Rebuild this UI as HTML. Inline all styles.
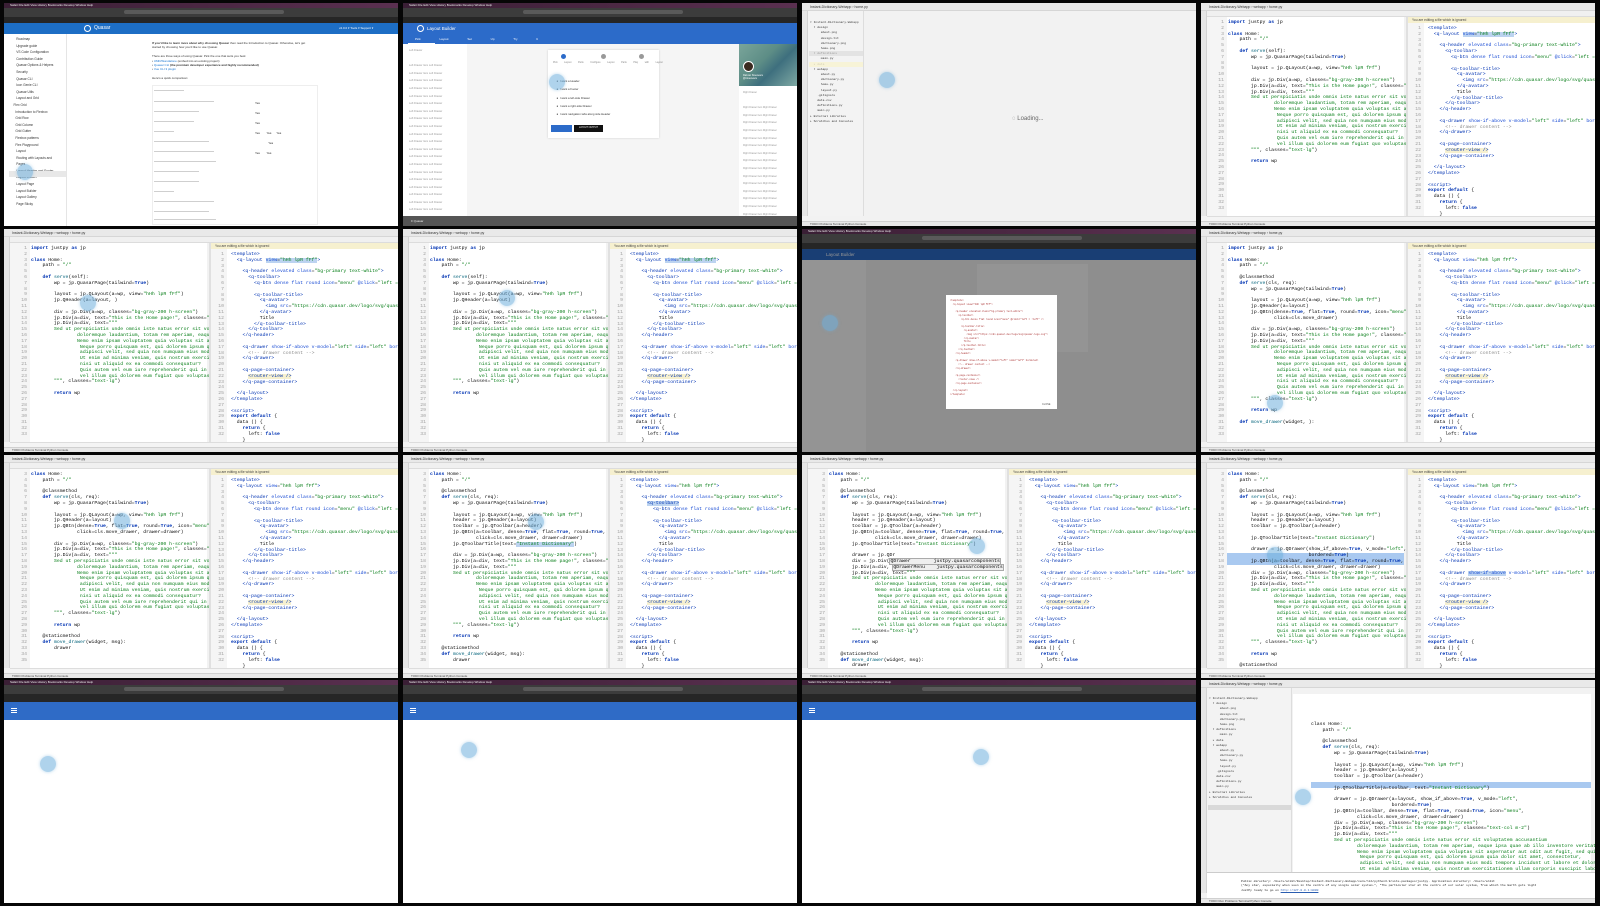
<!DOCTYPE html>
<html><head><meta charset="utf-8">
<style>
*{margin:0;padding:0;box-sizing:border-box}
body{width:1600px;height:906px;background:#060606;position:relative;overflow:hidden;font-family:"Liberation Sans",sans-serif}
.t{position:absolute;width:394px;height:223px;overflow:hidden;background:#f2f2f2}
.a{position:absolute}
pre{font-family:"Liberation Mono",monospace;font-size:4.8px;line-height:5.8px;white-space:pre;color:#080808}
.k{color:#0033b3;font-weight:bold}.s{color:#067d17}.d{color:#067d17}.f{color:#00627a}.tg{color:#0033b3}.at{color:#174ad4}.cm{color:#8c8c8c}
.ttl{left:0;top:0;width:394px;height:8px;background:#e9e9e9;border-bottom:1px solid #d6d6d6;font-size:3.5px;line-height:8px;padding-left:8px;color:#333}
.tabs{left:6px;top:8px;width:388px;height:6px;background:#f0f0f0;border-bottom:1px solid #dcdcdc}
.ls{left:0;top:8px;width:6px;height:205px;background:#e6e6e6;border-right:1px solid #d3d3d3}
.e1{left:6px;top:14px;width:197px;height:199px;background:#fff}
.e2{left:205px;top:14px;width:189px;height:199px;background:#fff;border-left:2px solid #e0e0e0}
.g{left:0;top:0;width:20px;height:199px;background:#f5f5f5;color:#a0a0a0;text-align:right;padding-right:3px;padding-top:3px}
.note{left:0;top:0;width:189px;height:6px;background:#f6f0cf;font-size:3.3px;line-height:6px;padding-left:4px;color:#444}
.bc{left:6px;top:213px;width:388px;height:5px;background:#f4f4f4;border-top:1px solid #ddd}
.sb{left:0;top:218px;width:394px;height:5px;background:#e8e8e8;font-size:3px;line-height:5px;padding-left:8px;color:#444;border-top:1px solid #d0d0d0}
.mb{left:0;top:0;width:394px;height:5px;background:linear-gradient(90deg,#3a1f35,#4a2742 50%,#5a3050);font-size:3px;line-height:5px;color:#eee;padding-left:6px}
.tb{left:0;top:5px;width:394px;height:9px;background:#3c3c3c}
.url{left:120px;top:7px;width:160px;height:4px;background:#5a5a5a;border-radius:2px}
.tab{left:0;top:14px;width:394px;height:6px;background:#262626}
.c{position:absolute;width:16px;height:16px;border-radius:50%;background:rgba(110,175,220,.55);box-shadow:0 0 3px rgba(110,175,220,.5)}
.ln{height:1.3px;background:#cfcfcf;position:absolute}
</style></head><body>

<!-- ROW 1 COL 1 : Quasar docs -->
<div class="t" style="left:4px;top:3px;background:#fff">
<div class="a mb">  Safari  File  Edit  View  History  Bookmarks  Develop  Window  Help</div>
<div class="a tb"></div><div class="a url"></div><div class="a tab"></div>
<div class="a" style="left:0;top:20px;width:394px;height:11px;background:#1d6ec5"></div>
<div class="a" style="left:80px;top:22px;width:7px;height:7px;border-radius:50%;border:1px solid #fff"></div>
<div class="a" style="left:90px;top:22px;font-size:5px;color:#fff">Quasar</div>
<div class="a" style="left:335px;top:23px;font-size:3px;color:#fff">v2.0.0 ▾    Tools ▾    Support ▾</div>
<div class="a" style="left:0;top:31px;width:63px;height:192px;background:#fff;border-right:1px solid #e5e5e5"></div>
<pre class="a" style="left:6px;top:33px;font-size:3.2px;line-height:6.6px;color:#333;font-family:'Liberation Sans',sans-serif">       Roadmap
       Upgrade guide
       VS Code Configuration
       Contribution Guide
       Quasar Options &amp; Helpers
       Security
       Quasar CLI
       Icon Genie CLI
       Quasar Utils
       Layout and Grid
    Flex Grid
      Introduction to Flexbox
      Grid Row
      Grid Column
      Grid Gutter
      Flexbox patterns
      Flex Playground
       Layout
       Routing with Layouts and
       Pages
       Layout Header and Footer
       Layout Drawer
       Layout Page
       Layout Builder
       Layout Gallery
       Page Sticky</pre>
<div class="a" style="left:5px;top:168px;width:57px;height:6px;background:#e8e8e8"></div>
<div class="a" style="left:148px;top:38px;width:160px;font-size:3px;line-height:4.4px;color:#333"><b>If you'd like to learn more about why choosing Quasar</b> then read the Introduction to Quasar. Otherwise, let's get started by choosing how you'd like to use Quasar.<br><br>There are three ways of using Quasar. Pick the one that suits you best:<br> • <span style="color:#1976d2">UMD/Standalone</span> (embed into an existing project)<br> • <span style="color:#1976d2">Quasar CLI</span> <b>(the premium developer experience and highly recommended)</b><br> • <span style="color:#1976d2">Vue CLI 3 plugin</span><br><br>Here's a quick comparison:</div>
<div class="a" style="left:148px;top:82px;width:166px;height:140px;border:1px solid #eee"></div>
<div class="ln" style="left:150px;top:87px;width:30px"></div>
<div class="ln" style="left:150px;top:98px;width:60px"></div><div class="ln" style="left:150px;top:108px;width:45px"></div><div class="ln" style="left:150px;top:118px;width:40px"></div><div class="ln" style="left:150px;top:128px;width:20px"></div><div class="ln" style="left:150px;top:138px;width:55px"></div><div class="ln" style="left:150px;top:148px;width:60px"></div><div class="ln" style="left:150px;top:158px;width:62px"></div><div class="ln" style="left:150px;top:168px;width:45px"></div><div class="ln" style="left:150px;top:178px;width:45px"></div><div class="ln" style="left:150px;top:188px;width:20px"></div><div class="ln" style="left:150px;top:198px;width:60px"></div><div class="ln" style="left:150px;top:208px;width:55px"></div><div class="ln" style="left:150px;top:216px;width:62px"></div>
<div class="a" style="left:251px;top:95px;width:60px;font-size:3px;line-height:10px;color:#222">Yes<br>Yes<br>Yes<br>Yes &nbsp;&nbsp;&nbsp;&nbsp;&nbsp;&nbsp; Yes &nbsp;&nbsp;&nbsp;&nbsp; Yes<br>&nbsp;&nbsp;&nbsp;&nbsp;&nbsp;&nbsp;&nbsp;&nbsp;&nbsp;&nbsp;&nbsp;&nbsp;&nbsp;&nbsp;&nbsp; Yes<br>Yes &nbsp;&nbsp;&nbsp;&nbsp;&nbsp;&nbsp; Yes</div>
</div>

<!-- ROW 1 COL 2 : Layout builder -->
<div class="t" style="left:403px;top:3px;background:#f5f5f5">
<div class="a mb">  Safari  File  Edit  View  History  Bookmarks  Develop  Window  Help</div>
<div class="a tb"></div><div class="a url"></div><div class="a tab"></div>
<div class="a" style="left:0;top:20px;width:394px;height:21px;background:#2c6bc9"></div>
<div class="a" style="left:14px;top:22px;width:7px;height:7px;border-radius:50%;border:1px solid #fff"></div>
<div class="a" style="left:24px;top:23px;font-size:4.5px;color:#fff">Layout Builder</div>
<div class="a" style="left:12px;top:34px;font-size:3px;color:#fff;word-spacing:18px">Pick&nbsp;Layout Set&nbsp;Up Try&nbsp;It</div>
<div class="a" style="left:5px;top:40px;width:27px;height:1px;background:#fff"></div>
<div class="a" style="left:0;top:41px;width:64px;height:174px;background:#fff"></div>
<pre class="a" style="left:6px;top:44px;font-size:2.6px;line-height:7.6px;color:#999;font-family:'Liberation Sans',sans-serif">Left Drawer

Left Drawer Item Left Drawer
Left Drawer Item Left Drawer
Left Drawer Item Left Drawer
Left Drawer Item Left Drawer
Left Drawer Item Left Drawer
Left Drawer Item Left Drawer
Left Drawer Item Left Drawer
Left Drawer Item Left Drawer
Left Drawer Item Left Drawer
Left Drawer Item Left Drawer
Left Drawer Item Left Drawer
Left Drawer Item Left Drawer
Left Drawer Item Left Drawer
Left Drawer Item Left Drawer
Left Drawer Item Left Drawer
Left Drawer Item Left Drawer
Left Drawer Item Left Drawer
Left Drawer Item Left Drawer
Left Drawer Item Left Drawer
Left Drawer Item Left Drawer
Left Drawer Item Left Drawer</pre>
<div class="a" style="left:145px;top:47px;width:111px;height:88px;background:#fff;box-shadow:0 0 2px #ccc"></div>
<div class="a" style="left:158px;top:51px;width:5px;height:5px;border-radius:50%;background:#2c6bc9"></div>
<div class="a" style="left:198px;top:51px;width:5px;height:5px;border-radius:50%;background:#999"></div>
<div class="a" style="left:236px;top:51px;width:5px;height:5px;border-radius:50%;background:#999"></div>
<div class="a" style="left:150px;top:58px;font-size:2.4px;color:#888;word-spacing:6px">Pick&nbsp;Layout&nbsp;Parts Configure&nbsp;Layout&nbsp;Parts Play&nbsp;with&nbsp;Layout</div>
<pre class="a" style="left:152px;top:74px;font-size:2.8px;line-height:8.3px;color:#333;font-family:'Liberation Sans',sans-serif">  ●  I want a Header
  ●  I want a Footer
  ●  I want a left-side Drawer
  ●  I want a right-side Drawer
  ●  I want navigation tabs along side Header</pre>
<div class="a" style="left:148px;top:122px;width:21px;height:7px;background:#2c6bc9"></div>
<div class="a" style="left:171px;top:122px;width:29px;height:7px;background:#111;font-size:2.3px;color:#fff;line-height:7px;text-align:center">LAYOUT OUTPUT</div>
<div class="a" style="left:336px;top:41px;width:58px;height:174px;background:#fff"></div>
<div class="a" style="left:336px;top:41px;width:58px;height:42px;background:linear-gradient(135deg,#7aa59a 0%,#5d8d86 40%,#3e6f7e 60%,#7fa9a3 100%)"></div>
<div class="a" style="left:340px;top:58px;width:11px;height:11px;border-radius:50%;background:#3a2a20;border:1px solid #fff"></div>
<div class="a" style="left:340px;top:71px;font-size:2.4px;color:#fff">Razvan Stoenescu<br>@rstoenescu</div>
<pre class="a" style="left:340px;top:86px;font-size:2.4px;line-height:7.6px;color:#999;font-family:'Liberation Sans',sans-serif">Right Drawer

Right Drawer Item Right Drawer
Right Drawer Item Right Drawer
Right Drawer Item Right Drawer
Right Drawer Item Right Drawer
Right Drawer Item Right Drawer
Right Drawer Item Right Drawer
Right Drawer Item Right Drawer
Right Drawer Item Right Drawer
Right Drawer Item Right Drawer
Right Drawer Item Right Drawer
Right Drawer Item Right Drawer
Right Drawer Item Right Drawer
Right Drawer Item Right Drawer
Right Drawer Item Right Drawer
Right Drawer Item Right Drawer
Right Drawer Item Right Drawer</pre>
<div class="a" style="left:0;top:213px;width:394px;height:10px;background:#555;font-size:3px;color:#eee;line-height:10px;padding-left:8px">≡  Quasar</div>
</div>

<!-- ROW 1 COL 3 : IDE loading -->
<div class="t" style="left:802px;top:3px">
<div class="a ttl">Instant-Dictionary-Webapp › home.py</div>
<div class="a ls"></div>
<div class="a" style="left:6px;top:8px;width:56px;height:205px;background:#f3f3f3;border-right:1px solid #ddd"></div>
<pre class="a" style="left:8px;top:17px;font-size:3px;line-height:5.2px;color:#333">▾ Instant-Dictionary-Webapp
  ▾ design
      about.png
      design.txt
      dictionary.png
      home.png
  ▾ definitions
      main.py
  ▸ data
  ▾ webapp
      about.py
      dictionary.py
      home.py
      layout.py
    .gitignore
    data.csv
    definitions.py
    main.py
▸ External Libraries
▸ Scratches and Consoles</pre>
<div class="a" style="left:7px;top:48px;width:54px;height:5px;background:#d9d9d9;opacity:.6"></div>
<div class="a" style="left:7px;top:59px;width:54px;height:5px;background:#f7f3d0;opacity:.8"></div>
<div class="a" style="left:210px;top:113px;font-size:6px;color:#666">◌ Loading...</div>
<div class="a sb">TODO  Problems  Terminal  Python Console</div>
</div>

<!-- shared CODE tile template used below -->
<!-- ROW 1 COL 4 -->
<div class="t" style="left:1201px;top:3px">
<div class="a ttl">Instant-Dictionary-Webapp › webapp › home.py</div><div class="a tabs"></div><div class="a ls"></div>
<div class="a e1"><pre class="a g">1
2
3
4
5
6
7
8
9
10
11
12
13
14
15
16
17
18
19
20
21
22
23
24
25
26
27
28
29
30
31
32
33</pre><pre class="a" style="left:21px;top:3px"><span class="k">import</span> justpy <span class="k">as</span> jp

<span class="k">class</span> Home:
    path = <span class="s">"/"</span>

    <span class="k">def</span> <span class="f">serve</span>(self):
        wp = jp.QuasarPage(tailwind=<span class="k">True</span>)

        layout = jp.QLayout(a=wp, view=<span class="s">"hHh lpR fFf"</span>)

        div = jp.Div(a=wp, classes=<span class="s">"bg-gray-200 h-screen"</span>)
        jp.Div(a=div, text=<span class="s">"This is the Home page!"</span>, classes=<span class="s">"text-4xl m-2"</span>)
        jp.Div(a=div, text=<span class="d">"""
        Sed ut perspiciatis unde omnis iste natus error sit voluptatem
                doloremque laudantium, totam rem aperiam, eaque ipsa quae
                Nemo enim ipsam voluptatem quia voluptas sit aspernatur aut
                 Neque porro quisquam est, qui dolorem ipsum quia dolor sit
                 adipisci velit, sed quia non numquam eius modi tempora
                 Ut enim ad minima veniam, quis nostrum exercitationem ullam
                 nisi ut aliquid ex ea commodi consequatur?
                 Quis autem vel eum iure reprehenderit qui in ea voluptate
                 vel illum qui dolorem eum fugiat quo voluptas nulla
        """</span>, classes=<span class="s">"text-lg"</span>)

        <span class="k">return</span> wp</pre></div>
<div class="a e2"><div class="a note">You are editing a file which is ignored</div><pre class="a g" style="top:6px;width:16px">1
2
3
4
5
6
7
8
9
10
11
12
13
14
15
16
17
18
19
20
21
22
23
24
25
26
27
28
29
30
31
32</pre><pre class="a" style="left:20px;top:9px"><span class="tg">&lt;template&gt;</span>
  <span class="tg">&lt;q-layout</span> <span style="background:#bcd3f0"><span class="at">view</span>=<span class="s">"hHh lpR fFf"</span></span><span class="tg">&gt;</span>

    <span class="tg">&lt;q-header</span> <span class="at">elevated class</span>=<span class="s">"bg-primary text-white"</span><span class="tg">&gt;</span>
      <span class="tg">&lt;q-toolbar&gt;</span>
        <span class="tg">&lt;q-btn</span> <span class="at">dense flat round icon</span>=<span class="s">"menu"</span> <span class="at">@click</span>=<span class="s">"left = !left"</span> /&gt;

        <span class="tg">&lt;q-toolbar-title&gt;</span>
          <span class="tg">&lt;q-avatar&gt;</span>
            <span class="tg">&lt;img</span> <span class="at">src</span>=<span class="s">"https://cdn.quasar.dev/logo/svg/quasar-logo.svg"</span>&gt;
          <span class="tg">&lt;/q-avatar&gt;</span>
          Title
        <span class="tg">&lt;/q-toolbar-title&gt;</span>
      <span class="tg">&lt;/q-toolbar&gt;</span>
    <span class="tg">&lt;/q-header&gt;</span>

    <span class="tg">&lt;q-drawer</span> <span class="at">show-if-above v-model</span>=<span class="s">"left"</span> <span class="at">side</span>=<span class="s">"left"</span> <span class="at">bordered</span>&gt;
      <span class="cm">&lt;!-- drawer content --&gt;</span>
    <span class="tg">&lt;/q-drawer&gt;</span>

    <span class="tg">&lt;q-page-container&gt;</span>
      <span class="tg" style="background:#f6f0cf">&lt;router-view /&gt;</span>
    <span class="tg">&lt;/q-page-container&gt;</span>

  <span class="tg">&lt;/q-layout&gt;</span>
<span class="tg">&lt;/template&gt;</span>

<span class="tg">&lt;script&gt;</span>
<span class="k">export default</span> {
  data () {
    <span class="k">return</span> {
      left: <span class="k">false</span>
    }
  }</pre></div>
<div class="a bc"></div><div class="a sb">TODO  Problems  Terminal  Python Console</div>
</div>

<!-- ROW 2 COL 1 -->
<div class="t" style="left:4px;top:229px">
<div class="a ttl">Instant-Dictionary-Webapp › webapp › home.py</div><div class="a tabs"></div><div class="a ls"></div>
<div class="a e1"><pre class="a g">1
2
3
4
5
6
7
8
9
10
11
12
13
14
15
16
17
18
19
20
21
22
23
24
25
26
27
28
29
30
31
32
33</pre><pre class="a" style="left:21px;top:3px"><span class="k">import</span> justpy <span class="k">as</span> jp

<span class="k">class</span> Home:
    path = <span class="s">"/"</span>

    <span class="k">def</span> <span class="f">serve</span>(self):
        wp = jp.QuasarPage(tailwind=<span class="k">True</span>)

        layout = jp.QLayout(a=wp, view=<span class="s">"hHh lpR fFf"</span>)
        jp.QHeader(a=layout, )

        div = jp.Div(a=wp, classes=<span class="s">"bg-gray-200 h-screen"</span>)
        jp.Div(a=div, text=<span class="s">"This is the Home page!"</span>, classes=<span class="s">"text-4xl m-2"</span>)
        jp.Div(a=div, text=<span class="d">"""
        Sed ut perspiciatis unde omnis iste natus error sit voluptatem
                doloremque laudantium, totam rem aperiam, eaque ipsa quae
                Nemo enim ipsam voluptatem quia voluptas sit aspernatur aut
                 Neque porro quisquam est, qui dolorem ipsum quia dolor sit
                 adipisci velit, sed quia non numquam eius modi tempora
                 Ut enim ad minima veniam, quis nostrum exercitationem ullam
                 nisi ut aliquid ex ea commodi consequatur?
                 Quis autem vel eum iure reprehenderit qui in ea voluptate
                 vel illum qui dolorem eum fugiat quo voluptas nulla
        """</span>, classes=<span class="s">"text-lg"</span>)

        <span class="k">return</span> wp</pre></div>
<div class="a e2"><div class="a note">You are editing a file which is ignored</div><pre class="a g" style="top:6px;width:16px">1
2
3
4
5
6
7
8
9
10
11
12
13
14
15
16
17
18
19
20
21
22
23
24
25
26
27
28
29
30
31
32</pre><pre class="a" style="left:20px;top:9px"><span class="tg">&lt;template&gt;</span>
  <span class="tg">&lt;q-layout</span> <span style="background:#bcd3f0"><span class="at">view</span>=<span class="s">"hHh lpR fFf"</span></span><span class="tg">&gt;</span>

    <span class="tg">&lt;q-header</span> <span class="at">elevated class</span>=<span class="s">"bg-primary text-white"</span><span class="tg">&gt;</span>
      <span class="tg">&lt;q-toolbar&gt;</span>
        <span class="tg">&lt;q-btn</span> <span class="at">dense flat round icon</span>=<span class="s">"menu"</span> <span class="at">@click</span>=<span class="s">"left = !left"</span> /&gt;

        <span class="tg">&lt;q-toolbar-title&gt;</span>
          <span class="tg">&lt;q-avatar&gt;</span>
            <span class="tg">&lt;img</span> <span class="at">src</span>=<span class="s">"https://cdn.quasar.dev/logo/svg/quasar-logo.svg"</span>&gt;
          <span class="tg">&lt;/q-avatar&gt;</span>
          Title
        <span class="tg">&lt;/q-toolbar-title&gt;</span>
      <span class="tg">&lt;/q-toolbar&gt;</span>
    <span class="tg">&lt;/q-header&gt;</span>

    <span class="tg">&lt;q-drawer</span> <span class="at">show-if-above v-model</span>=<span class="s">"left"</span> <span class="at">side</span>=<span class="s">"left"</span> <span class="at">bordered</span>&gt;
      <span class="cm">&lt;!-- drawer content --&gt;</span>
    <span class="tg">&lt;/q-drawer&gt;</span>

    <span class="tg">&lt;q-page-container&gt;</span>
      <span class="tg" style="background:#f6f0cf">&lt;router-view /&gt;</span>
    <span class="tg">&lt;/q-page-container&gt;</span>

  <span class="tg">&lt;/q-layout&gt;</span>
<span class="tg">&lt;/template&gt;</span>

<span class="tg">&lt;script&gt;</span>
<span class="k">export default</span> {
  data () {
    <span class="k">return</span> {
      left: <span class="k">false</span>
    }
  }</pre></div>
<div class="a bc"></div><div class="a sb">TODO  Problems  Terminal  Python Console</div>
</div>

<!-- ROW 2 COL 2 -->
<div class="t" style="left:403px;top:229px">
<div class="a ttl">Instant-Dictionary-Webapp › webapp › home.py</div><div class="a tabs"></div><div class="a ls"></div>
<div class="a e1"><pre class="a g">1
2
3
4
5
6
7
8
9
10
11
12
13
14
15
16
17
18
19
20
21
22
23
24
25
26
27
28
29
30
31
32
33</pre><pre class="a" style="left:21px;top:3px"><span class="k">import</span> justpy <span class="k">as</span> jp

<span class="k">class</span> Home:
    path = <span class="s">"/"</span>

    <span class="k">def</span> <span class="f">serve</span>(self):
        wp = jp.QuasarPage(tailwind=<span class="k">True</span>)

        layout = jp.QLayout(a=wp, view=<span class="s">"hHh lpR fFf"</span>)
        jp.QHeader(a=layout)

        div = jp.Div(a=wp, classes=<span class="s">"bg-gray-200 h-screen"</span>)
        jp.Div(a=div, text=<span class="s">"This is the Home page!"</span>, classes=<span class="s">"text-4xl m-2"</span>)
        jp.Div(a=div, text=<span class="d">"""
        Sed ut perspiciatis unde omnis iste natus error sit voluptatem
                doloremque laudantium, totam rem aperiam, eaque ipsa quae
                Nemo enim ipsam voluptatem quia voluptas sit aspernatur aut
                 Neque porro quisquam est, qui dolorem ipsum quia dolor sit
                 adipisci velit, sed quia non numquam eius modi tempora
                 Ut enim ad minima veniam, quis nostrum exercitationem ullam
                 nisi ut aliquid ex ea commodi consequatur?
                 Quis autem vel eum iure reprehenderit qui in ea voluptate
                 vel illum qui dolorem eum fugiat quo voluptas nulla
        """</span>, classes=<span class="s">"text-lg"</span>)

        <span class="k">return</span> wp</pre></div>
<div class="a e2"><div class="a note">You are editing a file which is ignored</div><pre class="a g" style="top:6px;width:16px">1
2
3
4
5
6
7
8
9
10
11
12
13
14
15
16
17
18
19
20
21
22
23
24
25
26
27
28
29
30
31
32</pre><pre class="a" style="left:20px;top:9px"><span class="tg">&lt;template&gt;</span>
  <span class="tg">&lt;q-layout</span> <span style="background:#bcd3f0"><span class="at">view</span>=<span class="s">"hHh lpR fFf"</span></span><span class="tg">&gt;</span>

    <span class="tg">&lt;q-header</span> <span class="at">elevated class</span>=<span class="s">"bg-primary text-white"</span><span class="tg">&gt;</span>
      <span class="tg">&lt;q-toolbar&gt;</span>
        <span class="tg">&lt;q-btn</span> <span class="at">dense flat round icon</span>=<span class="s">"menu"</span> <span class="at">@click</span>=<span class="s">"left = !left"</span> /&gt;

        <span class="tg">&lt;q-toolbar-title&gt;</span>
          <span class="tg">&lt;q-avatar&gt;</span>
            <span class="tg">&lt;img</span> <span class="at">src</span>=<span class="s">"https://cdn.quasar.dev/logo/svg/quasar-logo.svg"</span>&gt;
          <span class="tg">&lt;/q-avatar&gt;</span>
          Title
        <span class="tg">&lt;/q-toolbar-title&gt;</span>
      <span class="tg">&lt;/q-toolbar&gt;</span>
    <span class="tg">&lt;/q-header&gt;</span>

    <span class="tg">&lt;q-drawer</span> <span class="at">show-if-above v-model</span>=<span class="s">"left"</span> <span class="at">side</span>=<span class="s">"left"</span> <span class="at">bordered</span>&gt;
      <span class="cm">&lt;!-- drawer content --&gt;</span>
    <span class="tg">&lt;/q-drawer&gt;</span>

    <span class="tg">&lt;q-page-container&gt;</span>
      <span class="tg" style="background:#f6f0cf">&lt;router-view /&gt;</span>
    <span class="tg">&lt;/q-page-container&gt;</span>

  <span class="tg">&lt;/q-layout&gt;</span>
<span class="tg">&lt;/template&gt;</span>

<span class="tg">&lt;script&gt;</span>
<span class="k">export default</span> {
  data () {
    <span class="k">return</span> {
      left: <span class="k">false</span>
    }
  }</pre></div>
<div class="a bc"></div><div class="a sb">TODO  Problems  Terminal  Python Console</div>
</div>

<!-- ROW 2 COL 3 : dialog -->
<div class="t" style="left:802px;top:229px;background:#f5f5f5">
<div class="a mb">  Safari  File  Edit  View  History  Bookmarks  Develop  Window  Help</div>
<div class="a tb"></div><div class="a url"></div><div class="a tab"></div>
<div class="a" style="left:0;top:20px;width:394px;height:11px;background:#2c6bc9"></div>
<div class="a" style="left:24px;top:23px;font-size:4.5px;color:#fff">Layout Builder</div>
<div class="a" style="left:0;top:31px;width:64px;height:192px;background:#fff"></div>
<div class="a" style="left:175px;top:35px;width:111px;height:88px;background:#fff"></div>
<div class="a" style="left:0;top:20px;width:394px;height:203px;background:rgba(0,0,0,.42)"></div>
<div class="a" style="left:144px;top:66px;width:111px;height:114px;background:#fff"></div>
<pre class="a" style="left:148px;top:70px;font-size:2.3px;line-height:3.75px;color:#a33"><span>&lt;template&gt;</span>
  &lt;q-layout view="hHh lpR fFf"&gt;

    &lt;q-header elevated class="bg-primary text-white"&gt;
      &lt;q-toolbar&gt;
        &lt;q-btn dense flat round icon="menu" @click="left = !left" /&gt;

        &lt;q-toolbar-title&gt;
          &lt;q-avatar&gt;
            &lt;img src="https://cdn.quasar.dev/logo/svg/quasar-logo.svg"&gt;
          &lt;/q-avatar&gt;
          Title
        &lt;/q-toolbar-title&gt;
      &lt;/q-toolbar&gt;
    &lt;/q-header&gt;

    &lt;q-drawer show-if-above v-model="left" side="left" bordered&gt;
      &lt;!-- drawer content --&gt;
    &lt;/q-drawer&gt;

    &lt;q-page-container&gt;
      &lt;router-view /&gt;
    &lt;/q-page-container&gt;

  &lt;/q-layout&gt;
&lt;/template&gt;</pre>
<div class="a" style="left:240px;top:174px;font-size:2.5px;color:#555">CLOSE</div>
</div>

<!-- ROW 2 COL 4 -->
<div class="t" style="left:1201px;top:229px">
<div class="a ttl">Instant-Dictionary-Webapp › webapp › home.py</div><div class="a tabs"></div><div class="a ls"></div>
<div class="a e1"><pre class="a g">1
2
3
4
5
6
7
8
9
10
11
12
13
14
15
16
17
18
19
20
21
22
23
24
25
26
27
28
29
30
31
32
33</pre><pre class="a" style="left:21px;top:3px"><span class="k">import</span> justpy <span class="k">as</span> jp

<span class="k">class</span> Home:
    path = <span class="s">"/"</span>

    @classmethod
    <span class="k">def</span> <span class="f">serve</span>(cls, req):
        wp = jp.QuasarPage(tailwind=<span class="k">True</span>)

        layout = jp.QLayout(a=wp, view=<span class="s">"hHh lpR fFf"</span>)
        jp.QHeader(a=layout)
        jp.QBtn(dense=<span class="k">True</span>, flat=<span class="k">True</span>, round=<span class="k">True</span>, icon=<span class="s">"menu"</span>,
                click=cls.move_drawer)

        div = jp.Div(a=wp, classes=<span class="s">"bg-gray-200 h-screen"</span>)
        jp.Div(a=div, text=<span class="s">"This is the Home page!"</span>, classes=<span class="s">"text-4xl m-2"</span>)
        jp.Div(a=div, text=<span class="d">"""
        Sed ut perspiciatis unde omnis iste natus error sit voluptatem
                doloremque laudantium, totam rem aperiam, eaque ipsa quae
                Nemo enim ipsam voluptatem quia voluptas sit aspernatur aut
                 Neque porro quisquam est, qui dolorem ipsum quia dolor sit
                 adipisci velit, sed quia non numquam eius modi tempora
                 Ut enim ad minima veniam, quis nostrum exercitationem ullam
                 nisi ut aliquid ex ea commodi consequatur?
                 Quis autem vel eum iure reprehenderit qui in ea voluptate
                 vel illum qui dolorem eum fugiat quo voluptas nulla
        """</span>, classes=<span class="s">"text-lg"</span>)

        <span class="k">return</span> wp

    <span class="k">def</span> <span class="f">move_drawer</span>(widget, ):</pre></div>
<div class="a e2"><div class="a note">You are editing a file which is ignored</div><pre class="a g" style="top:6px;width:16px">1
2
3
4
5
6
7
8
9
10
11
12
13
14
15
16
17
18
19
20
21
22
23
24
25
26
27
28
29
30
31
32</pre><pre class="a" style="left:20px;top:9px"><span class="tg">&lt;template&gt;</span>
  <span class="tg">&lt;q-layout</span> <span class="at">view</span>=<span class="s">"hHh lpR fFf"</span><span class="tg">&gt;</span>

    <span class="tg">&lt;q-header</span> <span class="at">elevated class</span>=<span class="s">"bg-primary text-white"</span><span class="tg">&gt;</span>
      <span class="tg">&lt;q-toolbar&gt;</span>
        <span class="tg">&lt;q-btn</span> <span class="at">dense flat round icon</span>=<span class="s">"menu"</span> <span class="at">@click</span>=<span class="s">"left = !left"</span> /&gt;

        <span class="tg">&lt;q-toolbar-title&gt;</span>
          <span class="tg">&lt;q-avatar&gt;</span>
            <span class="tg">&lt;img</span> <span class="at">src</span>=<span class="s">"https://cdn.quasar.dev/logo/svg/quasar-logo.svg"</span>&gt;
          <span class="tg">&lt;/q-avatar&gt;</span>
          Title
        <span class="tg">&lt;/q-toolbar-title&gt;</span>
      <span class="tg">&lt;/q-toolbar&gt;</span>
    <span class="tg">&lt;/q-header&gt;</span>

    <span class="tg">&lt;q-drawer</span> <span class="at">show-if-above v-model</span>=<span class="s">"left"</span> <span class="at">side</span>=<span class="s">"left"</span> <span class="at">bordered</span>&gt;
      <span class="cm">&lt;!-- drawer content --&gt;</span>
    <span class="tg">&lt;/q-drawer&gt;</span>

    <span class="tg">&lt;q-page-container&gt;</span>
      <span class="tg" style="background:#f6f0cf">&lt;router-view /&gt;</span>
    <span class="tg">&lt;/q-page-container&gt;</span>

  <span class="tg">&lt;/q-layout&gt;</span>
<span class="tg">&lt;/template&gt;</span>

<span class="tg">&lt;script&gt;</span>
<span class="k">export default</span> {
  data () {
    <span class="k">return</span> {
      left: <span class="k">false</span>
    }
  }</pre></div>
<div class="a bc"></div><div class="a sb">TODO  Problems  Terminal  Python Console</div>
</div>

<!-- ROW 3 tiles (code variant B) -->
<div class="t" style="left:4px;top:455px">
<div class="a ttl">Instant-Dictionary-Webapp › webapp › home.py</div><div class="a tabs"></div><div class="a ls"></div>
<div class="a e1"><pre class="a g">3
4
5
6
7
8
9
10
11
12
13
14
15
16
17
18
19
20
21
22
23
24
25
26
27
28
29
30
31
32
33
34
35</pre><pre class="a" style="left:21px;top:3px"><span class="k">class</span> Home:
    path = <span class="s">"/"</span>

    @classmethod
    <span class="k">def</span> <span class="f">serve</span>(cls, req):
        wp = jp.QuasarPage(tailwind=<span class="k">True</span>)

        layout = jp.QLayout(a=wp, view=<span class="s">"hHh lpR fFf"</span>)
        jp.QHeader(a=layout)
        jp.QBtn(dense=<span class="k">True</span>, flat=<span class="k">True</span>, round=<span class="k">True</span>, icon=<span class="s">"menu"</span>,
                click=cls.move_drawer, drawer=drawer)

        div = jp.Div(a=wp, classes=<span class="s">"bg-gray-200 h-screen"</span>)
        jp.Div(a=div, text=<span class="s">"This is the Home page!"</span>, classes=<span class="s">"text-4xl m-2"</span>)
        jp.Div(a=div, text=<span class="d">"""
        Sed ut perspiciatis unde omnis iste natus error sit voluptatem
                doloremque laudantium, totam rem aperiam, eaque ipsa quae
                Nemo enim ipsam voluptatem quia voluptas sit aspernatur aut
                 Neque porro quisquam est, qui dolorem ipsum quia dolor sit
                 adipisci velit, sed quia non numquam eius modi tempora
                 Ut enim ad minima veniam, quis nostrum exercitationem ullam
                 nisi ut aliquid ex ea commodi consequatur?
                 Quis autem vel eum iure reprehenderit qui in ea voluptate
                 vel illum qui dolorem eum fugiat quo voluptas nulla
        """</span>, classes=<span class="s">"text-lg"</span>)

        <span class="k">return</span> wp

    @staticmethod
    <span class="k">def</span> <span class="f">move_drawer</span>(widget, msg):
        drawer</pre></div>
<div class="a e2"><div class="a note">You are editing a file which is ignored</div><pre class="a g" style="top:6px;width:16px">1
2
3
4
5
6
7
8
9
10
11
12
13
14
15
16
17
18
19
20
21
22
23
24
25
26
27
28
29
30
31
32</pre><pre class="a" style="left:20px;top:9px"><span class="tg">&lt;template&gt;</span>
  <span class="tg">&lt;q-layout</span> <span class="at">view</span>=<span class="s">"hHh lpR fFf"</span><span class="tg">&gt;</span>

    <span class="tg">&lt;q-header</span> <span class="at">elevated class</span>=<span class="s">"bg-primary text-white"</span><span class="tg">&gt;</span>
      <span class="tg">&lt;q-toolbar&gt;</span>
        <span class="tg">&lt;q-btn</span> <span class="at">dense flat round icon</span>=<span class="s">"menu"</span> <span class="at">@click</span>=<span class="s">"left = !left"</span> /&gt;

        <span class="tg">&lt;q-toolbar-title&gt;</span>
          <span class="tg">&lt;q-avatar&gt;</span>
            <span class="tg">&lt;img</span> <span class="at">src</span>=<span class="s">"https://cdn.quasar.dev/logo/svg/quasar-logo.svg"</span>&gt;
          <span class="tg">&lt;/q-avatar&gt;</span>
          Title
        <span class="tg">&lt;/q-toolbar-title&gt;</span>
      <span class="tg">&lt;/q-toolbar&gt;</span>
    <span class="tg">&lt;/q-header&gt;</span>

    <span class="tg">&lt;q-drawer</span> <span class="at">show-if-above v-model</span>=<span class="s">"left"</span> <span class="at">side</span>=<span class="s">"left"</span> <span class="at">bordered</span>&gt;
      <span class="cm">&lt;!-- drawer content --&gt;</span>
    <span class="tg">&lt;/q-drawer&gt;</span>

    <span class="tg">&lt;q-page-container&gt;</span>
      <span class="tg" style="background:#f6f0cf">&lt;router-view /&gt;</span>
    <span class="tg">&lt;/q-page-container&gt;</span>

  <span class="tg">&lt;/q-layout&gt;</span>
<span class="tg">&lt;/template&gt;</span>

<span class="tg">&lt;script&gt;</span>
<span class="k">export default</span> {
  data () {
    <span class="k">return</span> {
      left: <span class="k">false</span>
    }
  }</pre></div>
<div class="a bc"></div><div class="a sb">TODO  Problems  Terminal  Python Console</div>
</div>

<div class="t" style="left:403px;top:455px">
<div class="a ttl">Instant-Dictionary-Webapp › webapp › home.py</div><div class="a tabs"></div><div class="a ls"></div>
<div class="a e1"><pre class="a g">3
4
5
6
7
8
9
10
11
12
13
14
15
16
17
18
19
20
21
22
23
24
25
26
27
28
29
30
31
32
33
34
35</pre><pre class="a" style="left:21px;top:3px"><span class="k">class</span> Home:
    path = <span class="s">"/"</span>

    @classmethod
    <span class="k">def</span> <span class="f">serve</span>(cls, req):
        wp = jp.QuasarPage(tailwind=<span class="k">True</span>)

        layout = jp.QLayout(a=wp, view=<span class="s">"hHh lpR fFf"</span>)
        header = jp.QHeader(a=layout)
        toolbar = jp.QToolbar(a=header)
        jp.QBtn(a=toolbar, dense=<span class="k">True</span>, flat=<span class="k">True</span>, round=<span class="k">True</span>, icon=<span class="s">"menu"</span>,
                click=cls.move_drawer, drawer=drawer)
        jp.QToolbarTitle(text=<span class="s" style="background:#bcd3f0">"Instant Dictionary"</span>)

        div = jp.Div(a=wp, classes=<span class="s">"bg-gray-200 h-screen"</span>)
        jp.Div(a=div, text=<span class="s">"This is the Home page!"</span>, classes=<span class="s">"text-4xl m-2"</span>)
        jp.Div(a=div, text=<span class="d">"""
        Sed ut perspiciatis unde omnis iste natus error sit voluptatem
                doloremque laudantium, totam rem aperiam, eaque ipsa quae
                Nemo enim ipsam voluptatem quia voluptas sit aspernatur aut
                 Neque porro quisquam est, qui dolorem ipsum quia dolor sit
                 adipisci velit, sed quia non numquam eius modi tempora
                 Ut enim ad minima veniam, quis nostrum exercitationem ullam
                 nisi ut aliquid ex ea commodi consequatur?
                 Quis autem vel eum iure reprehenderit qui in ea voluptate
                 vel illum qui dolorem eum fugiat quo voluptas nulla
        """</span>, classes=<span class="s">"text-lg"</span>)

        <span class="k">return</span> wp

    @staticmethod
    <span class="k">def</span> <span class="f">move_drawer</span>(widget, msg):
        drawer</pre></div>
<div class="a e2"><div class="a note">You are editing a file which is ignored</div><pre class="a g" style="top:6px;width:16px">1
2
3
4
5
6
7
8
9
10
11
12
13
14
15
16
17
18
19
20
21
22
23
24
25
26
27
28
29
30
31
32</pre><pre class="a" style="left:20px;top:9px"><span class="tg">&lt;template&gt;</span>
  <span class="tg">&lt;q-layout</span> <span class="at">view</span>=<span class="s">"hHh lpR fFf"</span><span class="tg">&gt;</span>

    <span class="tg">&lt;q-header</span> <span class="at">elevated class</span>=<span class="s">"bg-primary text-white"</span><span class="tg">&gt;</span>
      <span class="tg" style="background:#bcd3f0">&lt;q-toolbar&gt;</span>
        <span class="tg">&lt;q-btn</span> <span class="at">dense flat round icon</span>=<span class="s">"menu"</span> <span class="at">@click</span>=<span class="s">"left = !left"</span> /&gt;

        <span class="tg">&lt;q-toolbar-title&gt;</span>
          <span class="tg">&lt;q-avatar&gt;</span>
            <span class="tg">&lt;img</span> <span class="at">src</span>=<span class="s">"https://cdn.quasar.dev/logo/svg/quasar-logo.svg"</span>&gt;
          <span class="tg">&lt;/q-avatar&gt;</span>
          Title
        <span class="tg">&lt;/q-toolbar-title&gt;</span>
      <span class="tg">&lt;/q-toolbar&gt;</span>
    <span class="tg">&lt;/q-header&gt;</span>

    <span class="tg">&lt;q-drawer</span> <span class="at">show-if-above v-model</span>=<span class="s">"left"</span> <span class="at">side</span>=<span class="s">"left"</span> <span class="at">bordered</span>&gt;
      <span class="cm">&lt;!-- drawer content --&gt;</span>
    <span class="tg">&lt;/q-drawer&gt;</span>

    <span class="tg">&lt;q-page-container&gt;</span>
      <span class="tg" style="background:#f6f0cf">&lt;router-view /&gt;</span>
    <span class="tg">&lt;/q-page-container&gt;</span>

  <span class="tg">&lt;/q-layout&gt;</span>
<span class="tg">&lt;/template&gt;</span>

<span class="tg">&lt;script&gt;</span>
<span class="k">export default</span> {
  data () {
    <span class="k">return</span> {
      left: <span class="k">false</span>
    }
  }</pre></div>
<div class="a bc"></div><div class="a sb">TODO  Problems  Terminal  Python Console</div>
</div>

<div class="t" style="left:802px;top:455px">
<div class="a ttl">Instant-Dictionary-Webapp › webapp › home.py</div><div class="a tabs"></div><div class="a ls"></div>
<div class="a e1"><pre class="a g">3
4
5
6
7
8
9
10
11
12
13
14
15
16
17
18
19
20
21
22
23
24
25
26
27
28
29
30
31
32
33
34
35</pre><pre class="a" style="left:21px;top:3px"><span class="k">class</span> Home:
    path = <span class="s">"/"</span>

    @classmethod
    <span class="k">def</span> <span class="f">serve</span>(cls, req):
        wp = jp.QuasarPage(tailwind=<span class="k">True</span>)

        layout = jp.QLayout(a=wp, view=<span class="s">"hHh lpR fFf"</span>)
        header = jp.QHeader(a=layout)
        toolbar = jp.QToolbar(a=header)
        jp.QBtn(a=toolbar, dense=<span class="k">True</span>, flat=<span class="k">True</span>, round=<span class="k">True</span>, icon=<span class="s">"menu"</span>,
                click=cls.move_drawer, drawer=drawer)
        jp.QToolbarTitle(text=<span class="s">"Instant Dictionary"</span>)

        drawer = jp.QDr
        div = jp.Div(<span style="background:#eee;border:0.5px solid #aaa">QDrawer        justpy.quasarcomponents</span>
        jp.Div(a=div, <span style="background:#eee;border:0.5px solid #aaa">QDrawerMenu    justpy.quasarcomponents</span>
        jp.Div(a=div, text=<span class="d">"""
        Sed ut perspiciatis unde omnis iste natus error sit voluptatem
                doloremque laudantium, totam rem aperiam, eaque ipsa quae
                Nemo enim ipsam voluptatem quia voluptas sit aspernatur aut
                 Neque porro quisquam est, qui dolorem ipsum quia dolor sit
                 adipisci velit, sed quia non numquam eius modi tempora
                 Ut enim ad minima veniam, quis nostrum exercitationem ullam
                 nisi ut aliquid ex ea commodi consequatur?
                 Quis autem vel eum iure reprehenderit qui in ea voluptate
                 vel illum qui dolorem eum fugiat quo voluptas nulla
        """</span>, classes=<span class="s">"text-lg"</span>)

        <span class="k">return</span> wp

    @staticmethod
    <span class="k">def</span> <span class="f">move_drawer</span>(widget, msg):
        drawer</pre></div>
<div class="a e2"><div class="a note">You are editing a file which is ignored</div><pre class="a g" style="top:6px;width:16px">1
2
3
4
5
6
7
8
9
10
11
12
13
14
15
16
17
18
19
20
21
22
23
24
25
26
27
28
29
30
31
32</pre><pre class="a" style="left:20px;top:9px"><span class="tg">&lt;template&gt;</span>
  <span class="tg">&lt;q-layout</span> <span class="at">view</span>=<span class="s">"hHh lpR fFf"</span><span class="tg">&gt;</span>

    <span class="tg">&lt;q-header</span> <span class="at">elevated class</span>=<span class="s">"bg-primary text-white"</span><span class="tg">&gt;</span>
      <span class="tg">&lt;q-toolbar&gt;</span>
        <span class="tg">&lt;q-btn</span> <span class="at">dense flat round icon</span>=<span class="s">"menu"</span> <span class="at">@click</span>=<span class="s">"left = !left"</span> /&gt;

        <span class="tg">&lt;q-toolbar-title&gt;</span>
          <span class="tg">&lt;q-avatar&gt;</span>
            <span class="tg">&lt;img</span> <span class="at">src</span>=<span class="s">"https://cdn.quasar.dev/logo/svg/quasar-logo.svg"</span>&gt;
          <span class="tg">&lt;/q-avatar&gt;</span>
          Title
        <span class="tg">&lt;/q-toolbar-title&gt;</span>
      <span class="tg">&lt;/q-toolbar&gt;</span>
    <span class="tg">&lt;/q-header&gt;</span>

    <span class="tg">&lt;q-drawer</span> <span class="at">show-if-above v-model</span>=<span class="s">"left"</span> <span class="at">side</span>=<span class="s">"left"</span> <span class="at">bordered</span>&gt;
      <span class="cm">&lt;!-- drawer content --&gt;</span>
    <span class="tg">&lt;/q-drawer&gt;</span>

    <span class="tg">&lt;q-page-container&gt;</span>
      <span class="tg" style="background:#f6f0cf">&lt;router-view /&gt;</span>
    <span class="tg">&lt;/q-page-container&gt;</span>

  <span class="tg">&lt;/q-layout&gt;</span>
<span class="tg">&lt;/template&gt;</span>

<span class="tg">&lt;script&gt;</span>
<span class="k">export default</span> {
  data () {
    <span class="k">return</span> {
      left: <span class="k">false</span>
    }
  }</pre></div>
<div class="a bc"></div><div class="a sb">TODO  Problems  Terminal  Python Console</div>
</div>

<div class="t" style="left:1201px;top:455px">
<div class="a ttl">Instant-Dictionary-Webapp › webapp › home.py</div><div class="a tabs"></div><div class="a ls"></div>
<div class="a e1"><div class="a" style="left:20px;top:84px;width:177px;height:12px;background:#a9c9f0"></div><pre class="a g">3
4
5
6
7
8
9
10
11
12
13
14
15
16
17
18
19
20
21
22
23
24
25
26
27
28
29
30
31
32
33
34
35</pre><pre class="a" style="left:21px;top:3px"><span class="k">class</span> Home:
    path = <span class="s">"/"</span>

    @classmethod
    <span class="k">def</span> <span class="f">serve</span>(cls, req):
        wp = jp.QuasarPage(tailwind=<span class="k">True</span>)

        layout = jp.QLayout(a=wp, view=<span class="s">"hHh lpR fFf"</span>)
        header = jp.QHeader(a=layout)
        toolbar = jp.QToolbar(a=header)

        jp.QToolbarTitle(text=<span class="s">"Instant Dictionary"</span>)

        drawer = jp.QDrawer(show_if_above=<span class="k">True</span>, v_mode=<span class="s">"left"</span>,
                            bordered=<span class="k">True</span>)
        jp.QBtn(a=toolbar, dense=<span class="k">True</span>, flat=<span class="k">True</span>, round=<span class="k">True</span>, icon=<span class="s">"menu"</span>,
                click=cls.move_drawer, drawer=drawer)
        div = jp.Div(a=wp, classes=<span class="s">"bg-grey-200 h-screen"</span>)
        jp.Div(a=div, text=<span class="s">"This is the Home page!"</span>, classes=<span class="s">"text-4xl m-2"</span>)
        jp.Div(a=div, text=<span class="d">"""
        Sed ut perspiciatis unde omnis iste natus error sit voluptatem
                doloremque laudantium, totam rem aperiam, eaque ipsa quae
                Nemo enim ipsam voluptatem quia voluptas sit aspernatur aut
                 Neque porro quisquam est, qui dolorem ipsum quia dolor sit
                 adipisci velit, sed quia non numquam eius modi tempora
                 Ut enim ad minima veniam, quis nostrum exercitationem ullam
                 nisi ut aliquid ex ea commodi consequatur?
                 Quis autem vel eum iure reprehenderit qui in ea voluptate
                 vel illum qui dolorem eum fugiat quo voluptas nulla
        """</span>, classes=<span class="s">"text-lg"</span>)

        <span class="k">return</span> wp

    @staticmethod
    <span class="k">def</span> <span class="f">move_drawer</span>(widget, msg):</pre></div>
<div class="a e2"><div class="a note">You are editing a file which is ignored</div><pre class="a g" style="top:6px;width:16px">1
2
3
4
5
6
7
8
9
10
11
12
13
14
15
16
17
18
19
20
21
22
23
24
25
26
27
28
29
30
31
32</pre><pre class="a" style="left:20px;top:9px"><span class="tg">&lt;template&gt;</span>
  <span class="tg">&lt;q-layout</span> <span class="at">view</span>=<span class="s">"hHh lpR fFf"</span><span class="tg">&gt;</span>

    <span class="tg">&lt;q-header</span> <span class="at">elevated class</span>=<span class="s">"bg-primary text-white"</span><span class="tg">&gt;</span>
      <span class="tg">&lt;q-toolbar&gt;</span>
        <span class="tg">&lt;q-btn</span> <span class="at">dense flat round icon</span>=<span class="s">"menu"</span> <span class="at">@click</span>=<span class="s">"left = !left"</span> /&gt;

        <span class="tg">&lt;q-toolbar-title&gt;</span>
          <span class="tg">&lt;q-avatar&gt;</span>
            <span class="tg">&lt;img</span> <span class="at">src</span>=<span class="s">"https://cdn.quasar.dev/logo/svg/quasar-logo.svg"</span>&gt;
          <span class="tg">&lt;/q-avatar&gt;</span>
          Title
        <span class="tg">&lt;/q-toolbar-title&gt;</span>
      <span class="tg">&lt;/q-toolbar&gt;</span>
    <span class="tg">&lt;/q-header&gt;</span>

    <span class="tg">&lt;q-drawer</span> <span style="background:#bcd3f0" class="at">show-if-above</span> <span class="at">v-model</span>=<span class="s">"left"</span> <span class="at">side</span>=<span class="s">"left"</span> <span class="at">bordered</span>&gt;
      <span class="cm">&lt;!-- drawer content --&gt;</span>
    <span class="tg">&lt;/q-drawer&gt;</span>

    <span class="tg">&lt;q-page-container&gt;</span>
      <span class="tg" style="background:#f6f0cf">&lt;router-view /&gt;</span>
    <span class="tg">&lt;/q-page-container&gt;</span>

  <span class="tg">&lt;/q-layout&gt;</span>
<span class="tg">&lt;/template&gt;</span>

<span class="tg">&lt;script&gt;</span>
<span class="k">export default</span> {
  data () {
    <span class="k">return</span> {
      left: <span class="k">false</span>
    }
  }</pre></div>
<div class="a bc"></div><div class="a sb">TODO  Problems  Terminal  Python Console</div>
</div>

<!-- ROW 4 : blue header pages -->
<div class="t" style="left:4px;top:680px;background:#fff">
<div class="a mb">  Safari  File  Edit  View  History  Bookmarks  Develop  Window  Help</div>
<div class="a tb"></div><div class="a url"></div><div class="a tab" style="height:8px"></div>
<div class="a" style="left:0;top:22px;width:394px;height:18px;background:#2f6bc6"></div>
<div class="a" style="left:7px;top:28px;width:6px;height:1px;background:#fff;box-shadow:0 2px 0 #fff,0 4px 0 #fff"></div>
</div>
<div class="t" style="left:403px;top:680px;background:#fff">
<div class="a mb">  Safari  File  Edit  View  History  Bookmarks  Develop  Window  Help</div>
<div class="a tb"></div><div class="a url"></div><div class="a tab" style="height:8px"></div>
<div class="a" style="left:0;top:22px;width:394px;height:18px;background:#2f6bc6"></div>
<div class="a" style="left:7px;top:28px;width:6px;height:1px;background:#fff;box-shadow:0 2px 0 #fff,0 4px 0 #fff"></div>
</div>
<div class="t" style="left:802px;top:680px;background:#fff">
<div class="a mb">  Safari  File  Edit  View  History  Bookmarks  Develop  Window  Help</div>
<div class="a tb"></div><div class="a url"></div><div class="a tab" style="height:8px"></div>
<div class="a" style="left:0;top:22px;width:394px;height:18px;background:#2f6bc6"></div>
<div class="a" style="left:7px;top:28px;width:6px;height:1px;background:#fff;box-shadow:0 2px 0 #fff,0 4px 0 #fff"></div>
</div>

<!-- ROW 4 COL 4 : IDE with tree + console -->
<div class="t" style="left:1201px;top:680px">
<div class="a ttl">Instant-Dictionary-Webapp › webapp › home.py</div><div class="a ls"></div>
<div class="a" style="left:6px;top:8px;width:85px;height:184px;background:#f3f3f3;border-right:1px solid #ddd"></div>
<pre class="a" style="left:8px;top:16px;font-size:3px;line-height:5.2px;color:#333">▾ Instant-Dictionary-Webapp
  ▾ design
      about.png
      design.txt
      dictionary.png
      home.png
  ▾ definitions
      main.py
  ▸ data
  ▾ webapp
      about.py
      dictionary.py
      home.py
      layout.py
    .gitignore
    data.csv
    definitions.py
    main.py
▸ External Libraries
▸ Scratches and Consoles</pre>
<div class="a" style="left:7px;top:125px;width:83px;height:5px;background:#d9d9d9"></div>
<div class="a" style="left:92px;top:14px;width:298px;height:178px;background:#fff"></div>
<div class="a" style="left:110px;top:102px;width:280px;height:6px;background:#a9c9f0"></div>
<pre class="a" style="left:110px;top:42px">class Home:
    path = <span class="s">"/"</span>

    @classmethod
    <span class="k">def</span> <span class="f">serve</span>(cls, req):
        wp = jp.QuasarPage(tailwind=<span class="k">True</span>)

        layout = jp.QLayout(a=wp, view=<span class="s">"hHh lpR fFf"</span>)
        header = jp.QHeader(a=layout)
        toolbar = jp.QToolbar(a=header)

        jp.QToolbarTitle(a=toolbar, text=<span class="s">"Instant Dictionary"</span>)

        drawer = jp.QDrawer(a=layout, show_if_above=<span class="k">True</span>, v_mode=<span class="s">"left"</span>,
                            bordered=<span class="k">True</span>)
        jp.QBtn(a=toolbar, dense=<span class="k">True</span>, flat=<span class="k">True</span>, round=<span class="k">True</span>, icon=<span class="s">"menu"</span>,
                click=cls.move_drawer, drawer=drawer)
        div = jp.Div(a=wp, classes=<span class="s">"bg-gray-200 h-screen"</span>)
        jp.Div(a=div, text=<span class="s">"This is the Home page!"</span>, classes=<span class="s">"text-col m-2"</span>)
        jp.Div(a=div, text=<span class="d">"""
        Sed ut perspiciatis unde omnis iste natus error sit voluptatem accusantium
                doloremque laudantium, totam rem aperiam, eaque ipsa quae ab illo inventore veritatis et
                Nemo enim ipsam voluptatem quia voluptas sit aspernatur aut odit aut fugit, sed quia cons
                 Neque porro quisquam est, qui dolorem ipsum quia dolor sit amet, consectetur,
                 adipisci velit, sed quia non numquam eius modi tempora incidunt ut labore et dolore magn
                 Ut enim ad minima veniam, quis nostrum exercitationem ullam corporis suscipit laborios
                 nisi ut aliquid ex ea commodi consequatur?
                 Quis autem vel eum iure reprehenderit qui in ea voluptate velit esse quam nihil molestia
                 vel illum qui dolorem eum fugiat quo voluptas nulla pariatur?
        """</span>, classes=<span class="s">"text-lg"</span>)</pre>
<div class="a" style="left:6px;top:192px;width:388px;height:26px;background:#fff;border-top:1px solid #ccc"></div>
<pre class="a" style="left:40px;top:200px;font-size:3px;line-height:4.4px;color:#222">Public directory: /Users/ardit/Desktop/Instant-Dictionary-Webapp/venv/lib/python3.9/site-packages/justpy. Application directory: /Users/ardit
("Any star, especially when seen in the centre of any single solar system.", "The particular star at the centre of our solar system, from which the Earth gets light
JustPy ready to go on <span style="color:#2a5db0;text-decoration:underline">http://127.0.0.1:8000</span></pre>
<div class="a sb">TODO  Run  Problems  Terminal  Python Console</div>
</div>

<!-- click highlight circles -->
<div class="c" style="left:17px;top:164px"></div>
<div class="c" style="left:549px;top:74px"></div>
<div class="c" style="left:879px;top:72px"></div>
<div class="c" style="left:80px;top:295px"></div>
<div class="c" style="left:499px;top:290px"></div>
<div class="c" style="left:822px;top:315px"></div>
<div class="c" style="left:1267px;top:395px"></div>
<div class="c" style="left:114px;top:513px"></div>
<div class="c" style="left:528px;top:514px"></div>
<div class="c" style="left:969px;top:538px"></div>
<div class="c" style="left:1267px;top:547px"></div>
<div class="c" style="left:40px;top:756px"></div>
<div class="c" style="left:461px;top:742px"></div>
<div class="c" style="left:973px;top:749px"></div>
<div class="c" style="left:1295px;top:789px"></div>
</body></html>
